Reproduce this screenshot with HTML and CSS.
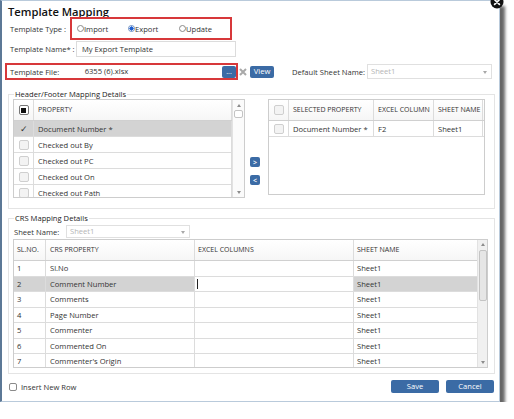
FILE: index.html
```html
<!DOCTYPE html>
<html lang="en">
<head>
  <meta charset="UTF-8">
  <title>Template Mapping</title>
  <link rel="stylesheet" href="styles.css">
</head>
<body>
  <div class="dialog">
    <span class="close-btn">
      <svg viewBox="0 0 14 14" width="14" height="14"><circle cx="7" cy="7" r="6.5" fill="#111"/><path d="M4.6 4.6l4.8 4.8M9.4 4.6l-4.8 4.8" stroke="#fff" stroke-width="1.6" stroke-linecap="round"/></svg>
    </span>
    <h1 class="title">Template Mapping</h1>

    <!-- template type -->
    <div class="form-row type-row">
      <span class="lbl">Template Type :</span>
      <div class="hilite radios">
        <label class="radio"><span class="dot"></span>Import</label>
        <label class="radio on"><span class="dot"></span>Export</label>
        <label class="radio"><span class="dot"></span>Update</label>
      </div>
    </div>

    <div class="form-row name-row">
      <span class="lbl">Template Name* :</span>
      <div class="txt name-input">My Export Template</div>
    </div>

    <div class="form-row file-row">
      <div class="hilite file-box">
        <span class="lbl">Template File:</span>
        <div class="txt file-input">6355 (6).xlsx</div>
        <button class="btn dots">...</button>
      </div>
      <svg class="clear" viewBox="0 0 8 8" width="8" height="8"><path d="M1 1l6 6M7 1l-6 6" stroke="#a9a9a9" stroke-width="2"/></svg>
      <button class="btn view">View</button>
      <span class="lbl dsn-lbl">Default Sheet Name:</span>
      <div class="select dsn-select">Sheet1<span class="caret"></span></div>
    </div>

    <!-- header / footer mapping -->
    <fieldset class="group hf">
      <legend>Header/Footer Mapping Details</legend>
      <div class="hf-body">
        <div class="grid prop-grid">
          <div class="grid-main">
            <div class="g-row g-head">
              <div class="cell cb-cell"><span class="cb all"></span></div>
              <div class="cell">PROPERTY</div>
            </div>
            <div class="g-row sel">
              <div class="cell cb-cell"><span class="tick">✓</span></div>
              <div class="cell">Document Number *</div>
            </div>
            <div class="g-row">
              <div class="cell cb-cell"><span class="cb"></span></div>
              <div class="cell">Checked out By</div>
            </div>
            <div class="g-row">
              <div class="cell cb-cell"><span class="cb"></span></div>
              <div class="cell">Checked out PC</div>
            </div>
            <div class="g-row">
              <div class="cell cb-cell"><span class="cb"></span></div>
              <div class="cell">Checked out On</div>
            </div>
            <div class="g-row">
              <div class="cell cb-cell"><span class="cb"></span></div>
              <div class="cell">Checked out Path</div>
            </div>
          </div>
          <div class="vscroll small">
            <span class="arr up"></span>
            <span class="thumb"></span>
            <span class="arr down"></span>
          </div>
        </div>

        <div class="movers">
          <button class="btn mv">&gt;</button>
          <button class="btn mv">&lt;</button>
        </div>

        <div class="grid sel-grid">
          <div class="grid-main">
            <div class="g-row g-head">
              <div class="cell cb-cell"><span class="cb"></span></div>
              <div class="cell">SELECTED PROPERTY</div>
              <div class="cell">EXCEL COLUMN</div>
              <div class="cell">SHEET NAME</div>
            </div>
            <div class="g-row">
              <div class="cell cb-cell"><span class="cb"></span></div>
              <div class="cell">Document Number *</div>
              <div class="cell">F2</div>
              <div class="cell">Sheet1</div>
            </div>
          </div>
        </div>
      </div>
    </fieldset>

    <!-- crs mapping -->
    <fieldset class="group crs">
      <legend>CRS Mapping Details</legend>
      <div class="sheet-row">
        <span class="lbl">Sheet Name:</span>
        <div class="select crs-select">Sheet1<span class="caret"></span></div>
      </div>
      <div class="grid crs-grid">
        <div class="grid-main">
          <div class="g-row g-head">
            <div class="cell">SL.NO.</div>
            <div class="cell">CRS PROPERTY</div>
            <div class="cell">EXCEL COLUMNS</div>
            <div class="cell">SHEET NAME</div>
          </div>
          <div class="g-row"><div class="cell">1</div><div class="cell">Sl.No</div><div class="cell"></div><div class="cell">Sheet1</div></div>
          <div class="g-row sel"><div class="cell">2</div><div class="cell">Comment Number</div><div class="cell edit"><span class="caret-line"></span></div><div class="cell">Sheet1</div></div>
          <div class="g-row"><div class="cell">3</div><div class="cell">Comments</div><div class="cell"></div><div class="cell">Sheet1</div></div>
          <div class="g-row"><div class="cell">4</div><div class="cell">Page Number</div><div class="cell"></div><div class="cell">Sheet1</div></div>
          <div class="g-row"><div class="cell">5</div><div class="cell">Commenter</div><div class="cell"></div><div class="cell">Sheet1</div></div>
          <div class="g-row"><div class="cell">6</div><div class="cell">Commented On</div><div class="cell"></div><div class="cell">Sheet1</div></div>
          <div class="g-row"><div class="cell">7</div><div class="cell">Commenter's Origin</div><div class="cell"></div><div class="cell">Sheet1</div></div>
        </div>
        <div class="vscroll big">
          <span class="arr up"></span>
          <span class="thumb"></span>
          <span class="arr down"></span>
        </div>
      </div>
    </fieldset>

    <div class="footer">
      <label class="check"><span class="box"></span>Insert New Row</label>
      <div class="actions">
        <button class="btn act">Save</button>
        <button class="btn act">Cancel</button>
      </div>
    </div>
  </div>
</body>
</html>
```

FILE: styles.css
```css
:root {
  --blue: #3b6ba5;
  --red: #d7383a;
  --line: #d6d6d6;
  --sel: #d3d3d3;
  --text: #333;
}
* { box-sizing: border-box; margin: 0; padding: 0; }
body {
  font-family: "Open Sans", sans-serif; font-size: 7.6px;
  color: var(--text); background: #fff;
}
.dialog {
  position: relative; width: 500px; height: 402px; background: #fff;
  border: 1px solid #b9cadb; border-left: 2px solid #5c7896;
  box-shadow: 5px 6px 3px rgba(0,0,0,0.6);
}
.close-btn { position: absolute; top: -6px; right: -5px; width: 14px; height: 14px; }
.close-btn svg { display: block; }
.title {
  font-size: 11.2px; font-weight: 600; line-height: 16px; color: #111;
  margin: 3px 0 -3px 6px;
}

.form-row { display: flex; align-items: center; }
.lbl { white-space: nowrap; }
.hilite { border: 2px solid var(--red); display: flex; align-items: center; }
.txt {
  border: 1px solid #dcdcdc; background: #fff; padding-left: 5px;
  white-space: nowrap;
}

.type-row { height: 23px; }
.type-row .lbl { width: 68px; padding-left: 8px; }
.radios { width: 162px; height: 23px; padding-left: 5px; }
.radio { width: 51px; display: flex; align-items: center; }
.dot {
  width: 7px; height: 7px; border: 1px solid #8a8a8a; border-radius: 50%;
  background: #fff;
}
.radio.on .dot {
  border-color: #6b8fc4; background: radial-gradient(circle, #1f5fd0 55%, #fff 62%);
}

.name-row { height: 16px; margin-top: 1px; }
.name-row .lbl { width: 74px; padding-left: 8px; }
.name-input { width: 160px; height: 16px; line-height: 14px; }

.file-row { height: 17px; margin-top: 6px; }
.file-box { width: 233px; height: 17px; margin-left: 3px; padding-left: 3px; }
.file-box .lbl { width: 69px; }
.file-input { width: 144px; height: 13px; line-height: 11px; border-color: #fff; }
.btn {
  background: var(--blue); color: #fff; border: none; border-radius: 2px;
  font-family: inherit; font-size: 7.6px; line-height: 1; cursor: pointer;
}
.dots { width: 14px; height: 12px; font-size: 7px; }
.clear { margin-left: 1px; flex: none; }
.view { width: 24px; height: 12px; margin-left: 3px; }
.dsn-lbl { width: 75px; margin-left: 18px; }
.select {
  position: relative; border: 1px solid #e0e0e0; color: #b5b5b5;
  padding-left: 3px; background: #fff;
}
.dsn-select { width: 125px; height: 15px; line-height: 13px; }
.caret {
  position: absolute; right: 4px; top: 50%; margin-top: -1px;
  border-left: 2.5px solid transparent; border-right: 2.5px solid transparent;
  border-top: 3px solid #a8a8a8;
}

/* fieldsets */
.group {
  border: 1px solid #e4e4e4; margin-left: 6px; width: 487px;
  padding: 0 4px;
}
.group legend { line-height: 10px; padding: 0 1px; margin-left: 1px; color: #222; }
.hf { margin-top: 9px; padding-bottom: 10px; }
.hf-body { display: flex; align-items: flex-start; }
.crs { margin-top: 4px; padding-bottom: 5px; }

/* grids */
.grid { display: flex; border: 1px solid #cdcdcd; background: #fff; overflow: hidden; }
.grid-main { flex: 1; overflow: hidden; }
.g-row { display: grid; height: 16px; border-bottom: 1px solid #dcdcdc; }
.g-row.g-head { height: 21px; border-bottom-color: #d0d0d0; background: linear-gradient(#fff, #f6f6f6); }
.cell {
  border-right: 1px solid #dcdcdc; padding-left: 4px;
  display: flex; align-items: center; white-space: nowrap; overflow: hidden;
}
.g-head .cell { display: block; line-height: 20px; font-size: 7px; text-overflow: ellipsis; padding-right: 1px; }
.g-row.sel { background: var(--sel); }
.cb-cell { justify-content: center; padding-left: 0; }
.g-head .cb-cell { display: flex; padding-right: 0; }
.cb {
  width: 10px; height: 10px; border: 1px solid #cfcfcf; border-radius: 2px;
  background: #f3f3f3;
}
.cb.all { background: #fff; border-color: #777; position: relative; }
.cb.all::after {
  content: ""; position: absolute; left: 1.5px; top: 1.5px; width: 5px; height: 5px; background: #111;
}
.tick { font-size: 9px; color: #333; }

.prop-grid { width: 232px; height: 99px; }
.prop-grid .g-row { grid-template-columns: 20px 1fr; }

.movers { display: flex; flex-direction: column; gap: 8px; margin: 58px 0 0 5px; }
.mv { width: 10px; height: 10px; font-size: 7px; font-weight: 600; padding: 0; }

.sel-grid { width: 217px; height: 96px; margin-left: 8px; }
.sel-grid .g-row { grid-template-columns: 20px 85px 60px 49px; }

.vscroll {
  border-left: 1px solid #e2e2e2; background: #fbfbfb;
  display: flex; flex-direction: column; align-items: center;
}
.vscroll .arr { width: 0; height: 0; border-left: 2.5px solid transparent; border-right: 2.5px solid transparent; }
.vscroll .up { border-bottom: 3px solid #8c8c8c; }
.vscroll .down { border-top: 3px solid #8c8c8c; margin-top: auto; }
.thumb { border: 1px solid #c4c4c4; border-radius: 2px; background: #fff; }
.vscroll.small { width: 12px; padding: 4px 0 3px; }
.vscroll.small .thumb { width: 9px; height: 8px; margin-top: 3px; }
.vscroll.big { width: 10px; padding: 3px 0 3px; background: #f0f0f0; }
.vscroll.big .thumb { width: 8px; height: 51px; margin-top: 4px; background: #e6e6e6; }

.sheet-row { display: flex; align-items: center; height: 13px; margin-top: 2px; padding-left: 1px; }
.sheet-row .lbl { width: 52px; }
.crs-select { width: 124px; height: 13px; line-height: 11px; }

.crs-grid { height: 129px; margin-top: 1px; width: 475px; }
.crs-grid .g-row { grid-template-columns: 32px 149px 159px 124px; height: 15.5px; }
.crs-grid .g-row.g-head { height: 21px; }
.crs-grid .cell { padding-left: 3px; }
.crs-grid .cell:nth-child(2) { padding-left: 4px; }
.edit { background: #fff; }
.caret-line { width: 1px; height: 10px; background: #222; margin-left: -1px; }

/* footer */
.footer {
  display: flex; align-items: center; justify-content: space-between;
  height: 13px; margin-top: 6px; padding: 0 5px 0 7px;
}
.check { display: flex; align-items: center; }
.check .box {
  width: 8px; height: 8px; border: 1px solid #8a8a8a; border-radius: 2px;
  margin-right: 4px; background: #fff;
}
.actions { display: flex; gap: 7px; }
.act { width: 48px; height: 13px; }
```
